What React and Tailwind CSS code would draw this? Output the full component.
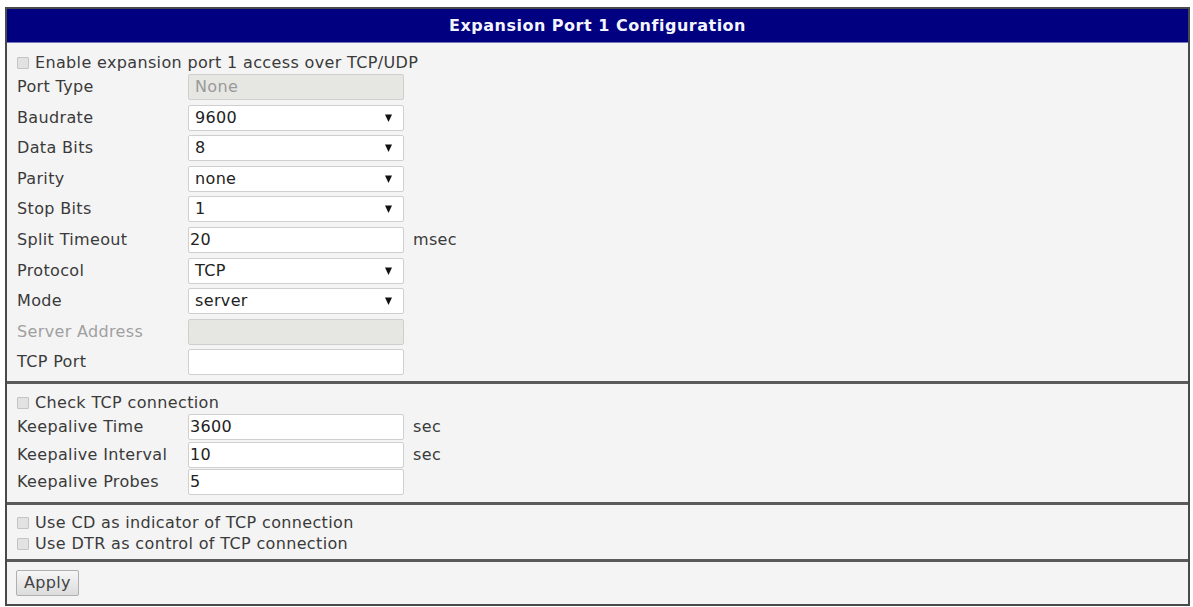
import React from 'react';

const font = { fontFamily: '"DejaVu Sans", Verdana, sans-serif' };

function Checkbox() {
  return <span className="inline-block w-[12px] h-[12px] border border-[#c4c4c4] bg-[#e2e2e2] rounded-[1px] mr-[6px] shrink-0" />;
}

function Select({ value }) {
  return (
    <div className="w-[216px] h-[26px] bg-white border border-[#cfcfcf] rounded-[2px] flex items-center justify-between pl-[6px] pr-[11px] text-[#222]">
      <span>{value}</span>
      <svg width="7" height="8" viewBox="0 0 7 8"><path d="M0 0.5h7L3.5 8z" fill="#111" /></svg>
    </div>
  );
}

function TextInput({ value, disabled }) {
  return (
    <div className={`w-[216px] h-[26px] border rounded-[2px] flex items-center ${disabled ? 'bg-[#e6e6e3] border-[#cfcfcc] text-[#9a9a9a] pl-[6px]' : 'bg-white border-[#cfcfcf] text-[#222] pl-[1px]'}`}>
      {value}
    </div>
  );
}

function Row({ label, children, unit, muted, h = 'h-[30.6px]' }) {
  return (
    <div className={`flex items-start ${h}`}>
      <div className={`w-[171px] h-[26px] flex items-center ${muted ? 'text-[#a0a0a0]' : 'text-[#3a3a3a]'}`}>{label}</div>
      {children}
      {unit && <div className="h-[26px] flex items-center ml-[9px] text-[#3a3a3a]">{unit}</div>}
    </div>
  );
}

function CheckRow({ label }) {
  return (
    <div className="flex items-center h-[21px] text-[#3a3a3a]">
      <Checkbox />
      <span>{label}</span>
    </div>
  );
}

export default function App() {
  return (
    <div className="w-[1193px] h-[607px] bg-white pt-[7px] pl-[5px]" style={font}>
      <div className="w-[1185px] h-[599px] border-2 border-[#4a4a4a] bg-[#f4f4f4] text-[16px] tracking-[0.35px] flex flex-col">
        {/* header */}
        <div className="h-[34px] shrink-0 bg-[#000080] border-b border-[#7078b8] flex items-center justify-center text-[#f4f4ff] font-bold text-[16px] tracking-[0.5px]">
          Expansion Port 1 Configuration
        </div>

        {/* port settings */}
        <div className="pl-[10px] pt-[8px] h-[341px] shrink-0 border-b-[3px] border-[#5a5a5a]">
          <div className="h-[23px] flex items-center"><CheckRow label="Enable expansion port 1 access over TCP/UDP" /></div>
          <Row label="Port Type"><TextInput value="None" disabled /></Row>
          <Row label="Baudrate"><Select value="9600" /></Row>
          <Row label="Data Bits"><Select value="8" /></Row>
          <Row label="Parity"><Select value="none" /></Row>
          <Row label="Stop Bits"><Select value="1" /></Row>
          <Row label="Split Timeout" unit="msec"><TextInput value="20" /></Row>
          <Row label="Protocol"><Select value="TCP" /></Row>
          <Row label="Mode"><Select value="server" /></Row>
          <Row label="Server Address" muted><TextInput value="" disabled /></Row>
          <Row label="TCP Port"><TextInput value="" /></Row>
        </div>

        {/* keepalive */}
        <div className="pl-[10px] pt-[8px] h-[121px] shrink-0 border-b-[3px] border-[#5a5a5a]">
          <div className="h-[22px] flex items-center"><CheckRow label="Check TCP connection" /></div>
          <Row label="Keepalive Time" unit="sec" h="h-[27.5px]"><TextInput value="3600" /></Row>
          <Row label="Keepalive Interval" unit="sec" h="h-[27.5px]"><TextInput value="10" /></Row>
          <Row label="Keepalive Probes" h="h-[27.5px]"><TextInput value="5" /></Row>
        </div>

        {/* cd / dtr */}
        <div className="pl-[10px] pt-[7px] h-[57px] shrink-0 border-b-[3px] border-[#5a5a5a]">
          <CheckRow label="Use CD as indicator of TCP connection" />
          <CheckRow label="Use DTR as control of TCP connection" />
        </div>

        {/* apply */}
        <div className="pl-[9px] pt-[8px]">
          <button className="h-[26px] px-[7px] border border-[#b0b0b0] rounded-[2px] bg-gradient-to-b from-[#f6f6f6] to-[#dcdcdc] text-[#444] text-[16px]">
            Apply
          </button>
        </div>
      </div>
    </div>
  );
}
